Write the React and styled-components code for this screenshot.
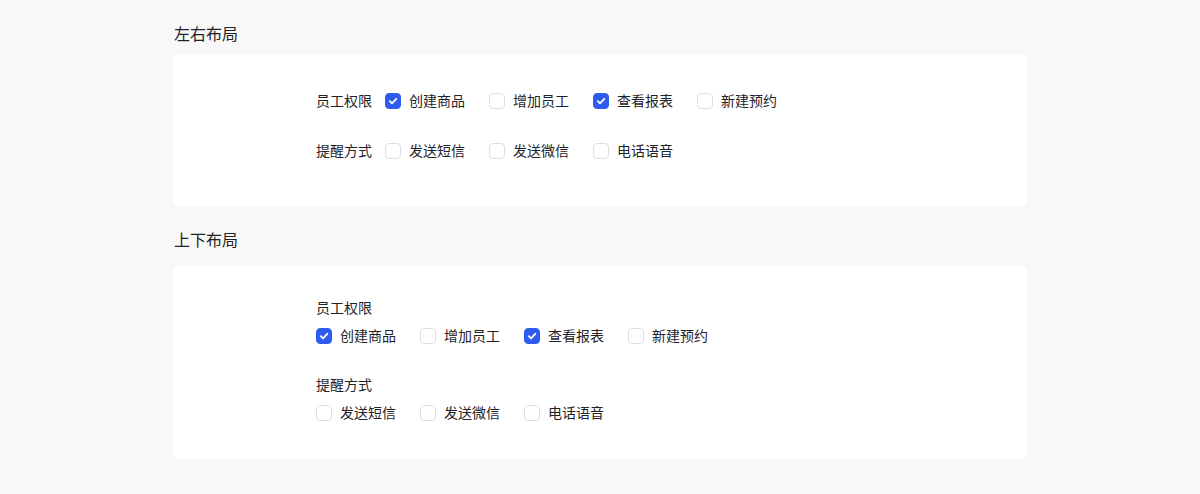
import React from "react";
import styled, { createGlobalStyle } from "styled-components";

const GlobalStyle = createGlobalStyle`
  body {
    margin: 0;
    background: #f8f8f8;
    font-family: Inter, "Noto Sans CJK SC", sans-serif;
    color: #1f2329;
  }
`;

const perms = [
  { label: "创建商品", checked: true },
  { label: "增加员工", checked: false },
  { label: "查看报表", checked: true },
  { label: "新建预约", checked: false },
];

const reminds = [
  { label: "发送短信", checked: false },
  { label: "发送微信", checked: false },
  { label: "电话语音", checked: false },
];

const Check = ({ checked, label }) => (
  <Option>
    <Box $checked={checked}>
      {checked && (
        <svg width="10" height="10" viewBox="0 0 10 10">
          <path
            d="M1.8 5.2 L4 7.3 L8.3 2.8"
            fill="none"
            stroke="#fff"
            strokeWidth="1.8"
            strokeLinecap="round"
            strokeLinejoin="round"
          />
        </svg>
      )}
    </Box>
    <OptionText>{label}</OptionText>
  </Option>
);

const Group = ({ items }) => (
  <Options>
    {items.map((it) => (
      <Check key={it.label} {...it} />
    ))}
  </Options>
);

const App = () => (
  <Page>
    <GlobalStyle />
    <Title $top={22} $bottom={8}>左右布局</Title>
    <Card $pt={32} $pb={41}>
      <InlineRow>
        <FieldLabel>员工权限</FieldLabel>
        <Group items={perms} />
      </InlineRow>
      <InlineRow>
        <FieldLabel>提醒方式</FieldLabel>
        <Group items={reminds} />
      </InlineRow>
    </Card>
    <Title $top={21} $bottom={13}>上下布局</Title>
    <Card $pt={32} $pb={35}>
      <StackRow>
        <FieldLabel>员工权限</FieldLabel>
        <Group items={perms} />
      </StackRow>
      <StackRow>
        <FieldLabel>提醒方式</FieldLabel>
        <Group items={reminds} />
      </StackRow>
    </Card>
  </Page>
);

export default App;

const Page = styled.div`
  width: 854px;
  margin: 0 auto;
  padding-bottom: 35px;
`;

const Title = styled.div`
  font-size: 16px;
  line-height: 24px;
  margin-top: ${(p) => p.$top}px;
  margin-bottom: ${(p) => p.$bottom}px;
  padding-left: 1px;
  color: #1f2329;
`;

const Card = styled.div`
  background: #fff;
  border-radius: 8px;
  padding: ${(p) => p.$pt}px 0 ${(p) => p.$pb}px 143px;
  display: flex;
  flex-direction: column;
`;

const InlineRow = styled.div`
  display: flex;
  align-items: center;
  height: 30px;
  & + & {
    margin-top: 20px;
  }
`;

const StackRow = styled.div`
  display: flex;
  flex-direction: column;
  gap: 6px;
  & + & {
    margin-top: 27px;
  }
`;

const FieldLabel = styled.div`
  font-size: 14px;
  line-height: 22px;
  color: #1f2329;
  margin-right: 13px;
`;

const Options = styled.div`
  display: flex;
  align-items: center;
  gap: 24px;
`;

const Option = styled.label`
  display: flex;
  align-items: center;
  gap: 8px;
  height: 22px;
`;

const Box = styled.span`
  width: 16px;
  height: 16px;
  box-sizing: border-box;
  border-radius: 4px;
  display: flex;
  align-items: center;
  justify-content: center;
  background: ${(p) => (p.$checked ? "#2e5bf0" : "#fff")};
  border: 1px solid ${(p) => (p.$checked ? "#2e5bf0" : "#dcdee3")};
`;

const OptionText = styled.span`
  font-size: 14px;
  line-height: 22px;
  color: #1f2329;
`;
